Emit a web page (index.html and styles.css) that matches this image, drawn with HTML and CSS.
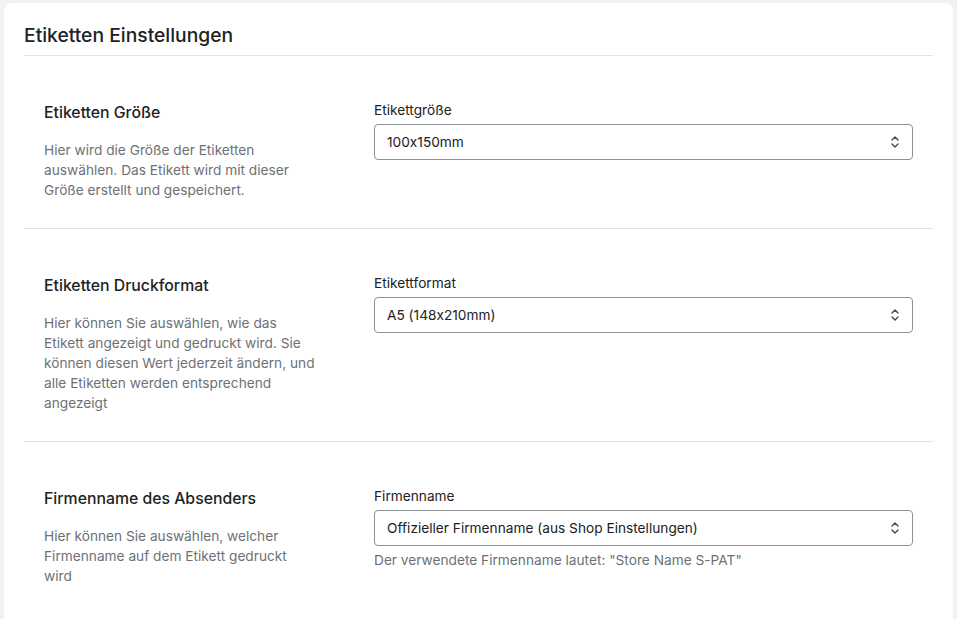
FILE: index.html
```html
<!DOCTYPE html>
<html lang="de">
<head>
<meta charset="utf-8">
<title>Etiketten Einstellungen</title>
<link rel="stylesheet" href="styles.css">
</head>
<body>
<div class="card">
  <div class="card-header">
    <h1 class="card-title">Etiketten Einstellungen</h1>
  </div>

  <section class="setting">
    <div class="setting-info">
      <h2 class="setting-title">Etiketten Größe</h2>
      <p class="setting-desc">Hier wird die Größe der Etiketten auswählen. Das Etikett wird mit dieser Größe erstellt und gespeichert.</p>
    </div>
    <div class="setting-field">
      <label class="field-label">Etikettgröße</label>
      <div class="select">
        <span class="select-value">100x150mm</span>
        <svg class="select-icon" viewBox="0 0 10 14" width="10" height="14"><path d="M2 5 L5 2 L8 5 M2 9 L5 12 L8 9" fill="none" stroke="#4a4f57" stroke-width="1.5" stroke-linecap="round" stroke-linejoin="round"/></svg>
      </div>
    </div>
  </section>

  <section class="setting">
    <div class="setting-info">
      <h2 class="setting-title">Etiketten Druckformat</h2>
      <p class="setting-desc">Hier können Sie auswählen, wie das Etikett angezeigt und gedruckt wird. Sie können diesen Wert jederzeit ändern, und alle Etiketten werden entsprechend angezeigt</p>
    </div>
    <div class="setting-field">
      <label class="field-label">Etikettformat</label>
      <div class="select">
        <span class="select-value">A5 (148x210mm)</span>
        <svg class="select-icon" viewBox="0 0 10 14" width="10" height="14"><path d="M2 5 L5 2 L8 5 M2 9 L5 12 L8 9" fill="none" stroke="#4a4f57" stroke-width="1.5" stroke-linecap="round" stroke-linejoin="round"/></svg>
      </div>
    </div>
  </section>

  <section class="setting last">
    <div class="setting-info">
      <h2 class="setting-title">Firmenname des Absenders</h2>
      <p class="setting-desc">Hier können Sie auswählen, welcher Firmenname auf dem Etikett gedruckt wird</p>
    </div>
    <div class="setting-field">
      <label class="field-label">Firmenname</label>
      <div class="select">
        <span class="select-value">Offizieller Firmenname (aus Shop Einstellungen)</span>
        <svg class="select-icon" viewBox="0 0 10 14" width="10" height="14"><path d="M2 5 L5 2 L8 5 M2 9 L5 12 L8 9" fill="none" stroke="#4a4f57" stroke-width="1.5" stroke-linecap="round" stroke-linejoin="round"/></svg>
      </div>
      <p class="field-help">Der verwendete Firmenname lautet: "Store Name S-PAT"</p>
    </div>
  </section>
</div>
</body>
</html>
```

FILE: styles.css
```css
html, body {
  margin: 0;
  padding: 0;
}
body {
  background: #f1f2f4;
  font-family: Inter, "Noto Sans", "Liberation Sans", sans-serif;
  font-feature-settings: "calt" 0;
  color: #202223;
  padding: 3px 4px 0 4px;
}
.card {
  background: #ffffff;
  border-radius: 8px 8px 0 0;
  padding: 0 20px 6px 20px;
}
.card-header {
  padding: 18px 0 6px 0;
  border-bottom: 1px solid #e1e3e5;
}
.card-title {
  margin: 0;
  font-size: 19.3px;
  line-height: 28px;
  font-weight: 500;
}
.setting {
  display: flex;
  padding: 44px 20px 28px 20px;
  border-bottom: 1px solid #e1e3e5;
}
.setting.last {
  border-bottom: none;
}
.setting-info {
  width: 272px;
  margin-right: 58px;
  flex-shrink: 0;
}
.setting-title {
  margin: 0;
  font-size: 15.8px;
  line-height: 26px;
  font-weight: 500;
}
.setting-desc {
  margin: 14px 0 0 0;
  font-size: 13.7px;
  line-height: 20px;
  color: #6d7175;
}
.setting-field {
  flex: 1;
}
.field-label {
  display: block;
  font-size: 13.7px;
  line-height: 20px;
  margin-bottom: 4px;
}
.select {
  display: flex;
  align-items: center;
  justify-content: space-between;
  height: 34px;
  border: 1px solid #8c9196;
  border-radius: 4px;
  padding: 0 12px;
  font-size: 13.7px;
}
.select-icon {
  flex-shrink: 0;
}
.field-help {
  margin: 4px 0 0 0;
  font-size: 13.7px;
  line-height: 20px;
  color: #6d7175;
}
```
